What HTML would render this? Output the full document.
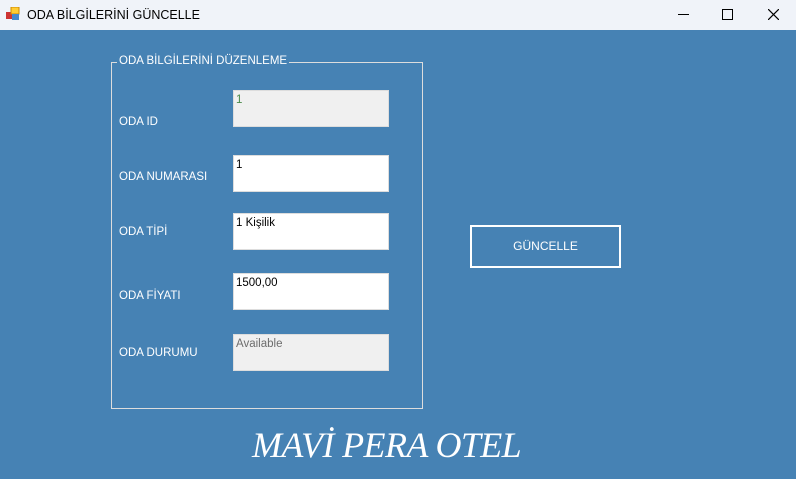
<!DOCTYPE html>
<html><head><style>
body{margin:0;width:796px;height:479px;overflow:hidden;font-family:"Liberation Sans",sans-serif;background:#4682b4;position:relative}
.tb{position:absolute;left:0;top:0;width:796px;height:30px;background:#f0f3f9;font-size:12.5px;color:#000}
.a{position:absolute}
.lbl{position:absolute;color:#fff;font-size:11.5px}
.box{position:absolute;left:233px;width:156px;height:37px;border:1px solid #ddd;background:#fff;font-size:11.5px;box-sizing:border-box;padding:3px 2px}
.ro{background:#f0f0f0;color:#6d6d6d}
</style></head><body>
<div class="tb">
<svg class="a" style="left:6px;top:7px" width="14" height="14"><rect x="0" y="5" width="6" height="7" fill="#c33"/><rect x="5" y="0" width="8" height="7" fill="#fc3" stroke="#c80"/><rect x="6" y="7" width="7" height="6" fill="#48c"/></svg>
<div class="a" style="left:27px;top:8px">ODA BİLGİLERİNİ GÜNCELLE</div>
<div class="a" style="left:678px;top:14px;width:11px;height:1px;background:#000"></div>
<div class="a" style="left:722px;top:9px;width:9px;height:9px;border:1px solid #000"></div>
<svg class="a" style="left:768px;top:9px" width="11" height="11"><path d="M0 0L11 11M11 0L0 11" stroke="#000" stroke-width="1.2"/></svg>
</div>
<div class="a" style="left:111px;top:62px;width:310px;height:345px;border:1px solid #ddd"></div>
<div class="lbl" style="left:117px;top:55px;background:#4682b4;padding:0 2px">ODA BİLGİLERİNİ DÜZENLEME</div>
<div class="lbl" style="left:119px;top:116px">ODA ID</div>
<div class="lbl" style="left:119px;top:171px">ODA NUMARASI</div>
<div class="lbl" style="left:119px;top:226px">ODA TİPİ</div>
<div class="lbl" style="left:119px;top:290px">ODA FİYATI</div>
<div class="lbl" style="left:119px;top:347px">ODA DURUMU</div>
<div class="box ro" style="top:90px;color:#4a8a4a">1</div>
<div class="box" style="top:155px">1</div>
<div class="box" style="top:213px">1 Kişilik</div>
<div class="box" style="top:273px">1500,00</div>
<div class="box ro" style="top:334px">Available</div>
<div class="a" style="left:470px;top:225px;width:147px;height:39px;border:2px solid #fff;color:#fff;font-size:12px;text-align:center;line-height:39px">GÜNCELLE</div>
<div class="a" style="left:252px;top:424px;color:#fff;font-family:'Liberation Serif',serif;font-style:italic;font-size:36px;letter-spacing:-0.6px">MAVİ PERA OTEL</div>
</body></html>
